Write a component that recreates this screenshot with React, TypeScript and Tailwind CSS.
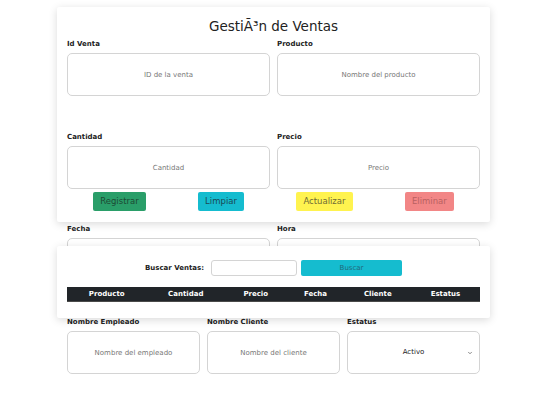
import { ChevronDown } from "lucide-react"

const topFields = [
  { label: "Id Venta", placeholder: "ID de la venta" },
  { label: "Producto", placeholder: "Nombre del producto" },
]

const midFields = [
  { label: "Cantidad", placeholder: "Cantidad" },
  { label: "Precio", placeholder: "Precio" },
]

const buttons = [
  { text: "Registrar", className: "bg-[#2a9e69] text-[#1c4a34]" },
  { text: "Limpiar", className: "bg-[#15bccf] text-[#1b4a55]" },
  { text: "Actualizar", className: "bg-[#fff34f] text-[#6f6b36]" },
  { text: "Eliminar", className: "bg-[#f28686] text-[#b96161]" },
]

const columns = ["Producto", "Cantidad", "Precio", "Fecha", "Cliente", "Estatus"]

function Field({ label, placeholder }: { label: string; placeholder?: string }) {
  return (
    <div>
      <label className="block text-[7px] leading-[9px] font-bold text-[#222] mb-[4px]">
        {label}
      </label>
      <input
        placeholder={placeholder}
        className="block w-full h-[43px] rounded-[5px] border border-[#d4d4d4] bg-white text-center text-[7px] text-[#333] placeholder:text-[#777] outline-none"
      />
    </div>
  )
}

export default function App() {
  return (
    <div className="min-h-screen bg-white pt-[7px] font-['DejaVu_Sans',sans-serif]">
      <div className="ml-[57px] w-[433px]">

        {/* Form card (content overflows its fixed height) */}
        <form className="h-[215px] bg-white rounded-[2px] shadow-[0_2px_8px_rgba(0,0,0,0.15)] px-[10px] pt-[11px]">
          <h1 className="text-center text-[13.5px] leading-[16px] text-[#222]">
            GestiÃ³n de Ventas
          </h1>

          <div className="mt-[6px] grid grid-cols-2 gap-x-[7px]">
            {topFields.map((f) => (
              <Field key={f.label} {...f} />
            ))}
          </div>

          <div className="mt-[37px] grid grid-cols-2 gap-x-[7px]">
            {midFields.map((f) => (
              <Field key={f.label} {...f} />
            ))}
          </div>

          {/* Buttons */}
          <div className="mt-[3px] flex justify-around">
            {buttons.map((b) => (
              <button
                key={b.text}
                type="button"
                className={`h-[19px] px-[7px] rounded-[2px] text-[8.5px] leading-[19px] ${b.className}`}
              >
                {b.text}
              </button>
            ))}
          </div>

          <div className="mt-[14px] grid grid-cols-2 gap-x-[7px]">
            <Field label="Fecha" />
            <Field label="Hora" />
          </div>

          <div className="mt-[37px] grid grid-cols-3 gap-x-[7px]">
            <Field label="Nombre Empleado" placeholder="Nombre del empleado" />
            <Field label="Nombre Cliente" placeholder="Nombre del cliente" />
            <div>
              <label className="block text-[7px] leading-[9px] font-bold text-[#222] mb-[4px]">
                Estatus
              </label>
              <div className="relative">
                <select className="block w-full h-[43px] appearance-none rounded-[5px] border border-[#d4d4d4] bg-white text-center [text-align-last:center] text-[7px] text-[#222] outline-none">
                  <option>Activo</option>
                  <option>Inactivo</option>
                </select>
                <ChevronDown className="absolute right-[7px] top-[19px] w-[6px] h-[6px] text-[#444] pointer-events-none" strokeWidth={2.5} />
              </div>
            </div>
          </div>
        </form>

        {/* Search card */}
        <div className="relative mt-[24px] h-[72px] bg-white rounded-[2px] shadow-[0_2px_8px_rgba(0,0,0,0.15)] px-[10px] pt-[14px]">
          <div className="flex items-center justify-center">
            <span className="text-[7px] font-bold text-[#222]">Buscar Ventas:</span>
            <input className="ml-[7px] w-[86px] h-[16px] rounded-[3px] border border-[#d4d4d4] bg-white outline-none" />
            <button
              type="button"
              className="ml-[4px] w-[101px] h-[16px] rounded-[2px] bg-[#15bccf] text-[7px] text-[#216a7c]"
            >
              Buscar
            </button>
          </div>

          <table className="mt-[11px] w-full border-collapse">
            <thead>
              <tr className="bg-[#212529] border-b border-[#4a4a4a]">
                {columns.map((c) => (
                  <th key={c} className="h-[14px] px-[6px] text-center text-[7px] font-bold text-white">
                    {c}
                  </th>
                ))}
              </tr>
            </thead>
            <tbody></tbody>
          </table>
        </div>

      </div>
    </div>
  )
}
